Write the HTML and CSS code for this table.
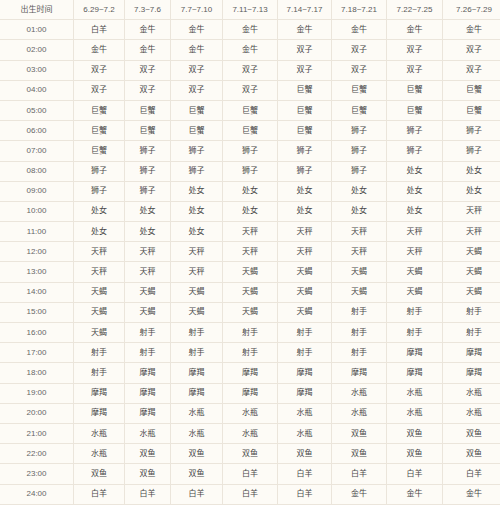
FILE: index.html
```html
<!DOCTYPE html>
<html lang="zh">
<head>
<meta charset="utf-8">
<title>星座时间表</title>
<link rel="stylesheet" href="styles.css">
</head>
<body>
<table class="zodiac">
<colgroup>
<col class="c0"><col class="c1"><col class="c2"><col class="c3"><col class="c4"><col class="c5"><col class="c6"><col class="c7"><col class="c8">
</colgroup>
<thead>
<tr><th>出生时间</th><th>6.29~7.2</th><th>7.3~7.6</th><th>7.7~7.10</th><th>7.11~7.13</th><th>7.14~7.17</th><th>7.18~7.21</th><th>7.22~7.25</th><th>7.26~7.29</th></tr>
</thead>
<tbody>
<tr><td class="t">01:00</td><td>白羊</td><td>金牛</td><td>金牛</td><td>金牛</td><td>金牛</td><td>金牛</td><td>金牛</td><td>金牛</td></tr>
<tr><td class="t">02:00</td><td>金牛</td><td>金牛</td><td>金牛</td><td>金牛</td><td>双子</td><td>双子</td><td>双子</td><td>双子</td></tr>
<tr><td class="t">03:00</td><td>双子</td><td>双子</td><td>双子</td><td>双子</td><td>双子</td><td>双子</td><td>双子</td><td>双子</td></tr>
<tr><td class="t">04:00</td><td>双子</td><td>双子</td><td>双子</td><td>双子</td><td>巨蟹</td><td>巨蟹</td><td>巨蟹</td><td>巨蟹</td></tr>
<tr><td class="t">05:00</td><td>巨蟹</td><td>巨蟹</td><td>巨蟹</td><td>巨蟹</td><td>巨蟹</td><td>巨蟹</td><td>巨蟹</td><td>巨蟹</td></tr>
<tr><td class="t">06:00</td><td>巨蟹</td><td>巨蟹</td><td>巨蟹</td><td>巨蟹</td><td>巨蟹</td><td>狮子</td><td>狮子</td><td>狮子</td></tr>
<tr><td class="t">07:00</td><td>巨蟹</td><td>狮子</td><td>狮子</td><td>狮子</td><td>狮子</td><td>狮子</td><td>狮子</td><td>狮子</td></tr>
<tr><td class="t">08:00</td><td>狮子</td><td>狮子</td><td>狮子</td><td>狮子</td><td>狮子</td><td>狮子</td><td>处女</td><td>处女</td></tr>
<tr><td class="t">09:00</td><td>狮子</td><td>狮子</td><td>处女</td><td>处女</td><td>处女</td><td>处女</td><td>处女</td><td>处女</td></tr>
<tr><td class="t">10:00</td><td>处女</td><td>处女</td><td>处女</td><td>处女</td><td>处女</td><td>处女</td><td>处女</td><td>天秤</td></tr>
<tr><td class="t">11:00</td><td>处女</td><td>处女</td><td>处女</td><td>天秤</td><td>天秤</td><td>天秤</td><td>天秤</td><td>天秤</td></tr>
<tr><td class="t">12:00</td><td>天秤</td><td>天秤</td><td>天秤</td><td>天秤</td><td>天秤</td><td>天秤</td><td>天秤</td><td>天蝎</td></tr>
<tr><td class="t">13:00</td><td>天秤</td><td>天秤</td><td>天秤</td><td>天蝎</td><td>天蝎</td><td>天蝎</td><td>天蝎</td><td>天蝎</td></tr>
<tr><td class="t">14:00</td><td>天蝎</td><td>天蝎</td><td>天蝎</td><td>天蝎</td><td>天蝎</td><td>天蝎</td><td>天蝎</td><td>天蝎</td></tr>
<tr><td class="t">15:00</td><td>天蝎</td><td>天蝎</td><td>天蝎</td><td>天蝎</td><td>天蝎</td><td>射手</td><td>射手</td><td>射手</td></tr>
<tr><td class="t">16:00</td><td>天蝎</td><td>射手</td><td>射手</td><td>射手</td><td>射手</td><td>射手</td><td>射手</td><td>射手</td></tr>
<tr><td class="t">17:00</td><td>射手</td><td>射手</td><td>射手</td><td>射手</td><td>射手</td><td>射手</td><td>摩羯</td><td>摩羯</td></tr>
<tr><td class="t">18:00</td><td>射手</td><td>摩羯</td><td>摩羯</td><td>摩羯</td><td>摩羯</td><td>摩羯</td><td>摩羯</td><td>摩羯</td></tr>
<tr><td class="t">19:00</td><td>摩羯</td><td>摩羯</td><td>摩羯</td><td>摩羯</td><td>摩羯</td><td>水瓶</td><td>水瓶</td><td>水瓶</td></tr>
<tr><td class="t">20:00</td><td>摩羯</td><td>摩羯</td><td>水瓶</td><td>水瓶</td><td>水瓶</td><td>水瓶</td><td>水瓶</td><td>水瓶</td></tr>
<tr><td class="t">21:00</td><td>水瓶</td><td>水瓶</td><td>水瓶</td><td>水瓶</td><td>水瓶</td><td>双鱼</td><td>双鱼</td><td>双鱼</td></tr>
<tr><td class="t">22:00</td><td>水瓶</td><td>双鱼</td><td>双鱼</td><td>双鱼</td><td>双鱼</td><td>双鱼</td><td>双鱼</td><td>双鱼</td></tr>
<tr><td class="t">23:00</td><td>双鱼</td><td>双鱼</td><td>双鱼</td><td>白羊</td><td>白羊</td><td>白羊</td><td>白羊</td><td>白羊</td></tr>
<tr><td class="t">24:00</td><td>白羊</td><td>白羊</td><td>白羊</td><td>白羊</td><td>白羊</td><td>金牛</td><td>金牛</td><td>金牛</td></tr>
</tbody>
</table>
</body>
</html>
```

FILE: styles.css
```css
html, body {
  margin: 0;
  padding: 0;
  overflow: hidden;
  background: #fdfbf6;
}

.zodiac {
  width: 506px;
  table-layout: fixed;
  border-collapse: collapse;
  font-family: "Liberation Sans", "Noto Sans CJK SC", sans-serif;
  font-size: 8px;
  color: #4a4a4a;
  margin-top: -1px;
  margin-left: -1px;
}

.c0 { width: 74px; }
.c1 { width: 51px; }
.c2 { width: 46px; }
.c3 { width: 52px; }
.c4 { width: 55px; }
.c5 { width: 54px; }
.c6 { width: 55px; }
.c7 { width: 56px; }
.c8 { width: 63px; }

.zodiac tr {
  height: 20.2px;
}

.zodiac th,
.zodiac td {
  border: 1px solid #ebe5db;
  padding: 0;
  text-align: center;
  vertical-align: middle;
  font-weight: normal;
  line-height: 1;
  white-space: nowrap;
}

.zodiac th {
  color: #5a5a5a;
}

.zodiac td.t {
  color: #666;
}
```
